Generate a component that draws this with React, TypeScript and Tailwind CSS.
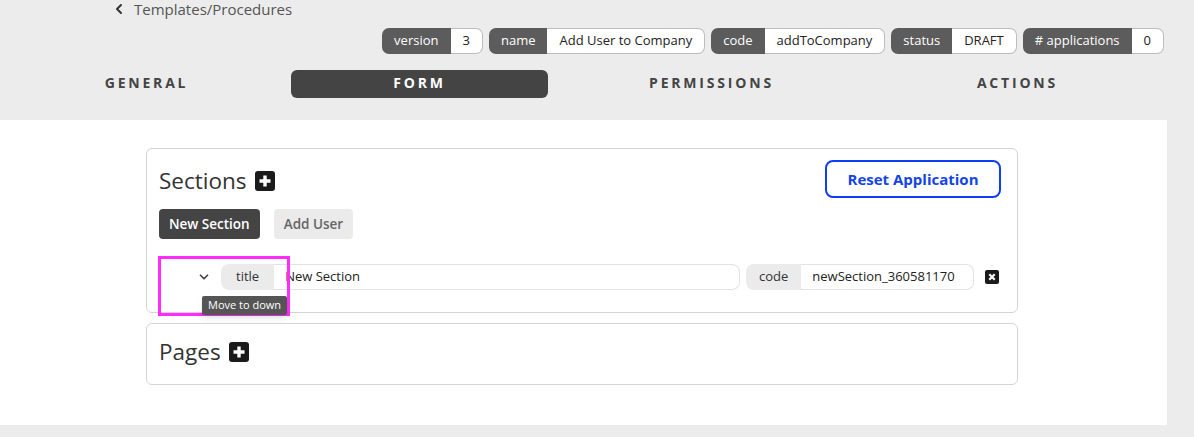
import { ChevronLeft, ChevronDown } from "lucide-react";

const meta = [
  { label: "version", value: "3" },
  { label: "name", value: "Add User to Company" },
  { label: "code", value: "addToCompany" },
  { label: "status", value: "DRAFT" },
  { label: "# applications", value: "0" },
];

function PlusBox({ size = 20 }: { size?: number }) {
  return (
    <svg width={size} height={size} viewBox="0 0 20 20">
      <rect width="20" height="20" rx="3" fill="#1b1b1b" />
      <path d="M10 4.5v11M4.5 10h11" stroke="#fff" strokeWidth="3.4" />
    </svg>
  );
}

function CloseBox() {
  return (
    <svg width="14" height="14" viewBox="0 0 14 14">
      <rect width="14" height="14" rx="2" fill="#1b1b1b" />
      <path d="M4.3 4.3l5.4 5.4M9.7 4.3l-5.4 5.4" stroke="#fff" strokeWidth="2.2" />
    </svg>
  );
}

export default function App() {
  return (
    <div
      className="h-[437px] w-[1194px] overflow-hidden bg-[#ececec] text-[#333]"
      style={{ fontFamily: '"Open Sans", "Noto Sans", sans-serif' }}
    >
      {/* header */}
      <div className="flex h-[18px] items-center gap-[7px] pl-[111px] text-[15px] leading-[18px] text-[#555]">
        <ChevronLeft size={16} strokeWidth={3} className="text-[#333]" />
        <span>Templates/Procedures</span>
      </div>

      <div className="mt-[10px] flex justify-end gap-[6px] pr-[30px]">
        {meta.map((m) => (
          <div key={m.label} className="flex h-[26px] text-[13px]">
            <span className="flex items-center rounded-l-[7px] bg-[#5c5c5c] px-[12px] text-white">
              {m.label}
            </span>
            <span className="flex items-center rounded-r-[7px] border border-l-0 border-[#bdbdbd] bg-white px-[12px] text-[#222]">
              {m.value}
            </span>
          </div>
        ))}
      </div>

      {/* tabs */}
      <div className="mt-[16px] flex h-[28px] items-center text-[14px] font-bold tracking-[0.2em] text-[#444]">
        <div className="ml-[18px] flex w-[257px] justify-center pb-[4px]">GENERAL</div>
        <div className="ml-[16px] flex h-[28px] w-[257px] items-center justify-center rounded-[6px] bg-[#444] pb-[4px] text-white">
          FORM
        </div>
        <div className="ml-[35px] flex w-[257px] justify-center pb-[4px]">PERMISSIONS</div>
        <div className="ml-[49px] flex w-[257px] justify-center pb-[4px]">ACTIONS</div>
      </div>

      {/* body */}
      <div className="mt-[22px] h-[305px] w-[1167px] bg-white pt-[28px] pl-[146px]">
        <div className="w-[872px] rounded-[6px] border border-[#d4d4d5] px-[12px] pt-[11px] pb-[22px]">
          <div className="flex items-start justify-between">
            <div className="flex items-center gap-[8px] pt-[8px]">
              <span className="text-[22.5px] leading-[26px] text-[#333]">Sections</span>
              <PlusBox />
            </div>
            <button className="mr-[4px] h-[38px] w-[176px] rounded-[8px] border-2 border-[#0d3df2] text-[15px] font-bold text-[#1444e8]">
              Reset Application
            </button>
          </div>
          <div className="mt-[11px] flex gap-[14px]">
            <button className="h-[30px] rounded-[4px] bg-[#444] px-[10px] text-[13.5px] font-semibold text-white">
              New Section
            </button>
            <button className="h-[30px] rounded-[4px] bg-[#ebebeb] px-[10px] text-[13.5px] font-semibold text-[#666]">
              Add User
            </button>
          </div>
          <div className="relative mt-[25px] flex h-[26px] items-center">
            <div className="flex w-[62px] justify-end pr-[10px]">
              <ChevronDown size={14} strokeWidth={3} className="text-[#444]" />
            </div>
            <div className="flex h-[26px] w-[519px] text-[13px]">
              <span className="flex items-center rounded-l-[8px] bg-[#ebebeb] px-[15px] text-[#333]">title</span>
              <span className="flex flex-1 items-center rounded-r-[8px] border border-l-0 border-[#e3e3e3] bg-white pl-[11px] text-[#222]">
                New Section
              </span>
            </div>
            <div className="ml-[6px] flex h-[26px] w-[228px] text-[13px]">
              <span className="flex items-center rounded-l-[8px] bg-[#ebebeb] px-[13px] text-[#333]">code</span>
              <span className="flex flex-1 items-center rounded-r-[8px] border border-l-0 border-[#e3e3e3] bg-white pl-[11px] text-[#222]">
                newSection_360581170
              </span>
            </div>
            <div className="ml-[11px] flex items-center">
              <CloseBox />
            </div>

            {/* highlight + tooltip */}
            <div className="absolute left-[-1px] top-[-8px] h-[60px] w-[132px] border-[3px] border-[#ff2bff]" />
            <div className="absolute left-[43px] top-[32px] rounded-[2px] bg-[#555] px-[6px] py-[1px] text-[11px] text-white shadow-md">
              Move to down
            </div>
          </div>
        </div>

        <div className="mt-[10px] h-[62px] w-[872px] rounded-[6px] border border-[#d4d4d5] px-[12px] pt-[15px]">
          <div className="flex items-center gap-[8px]">
            <span className="text-[22.5px] leading-[26px] text-[#333]">Pages</span>
            <PlusBox />
          </div>
        </div>
      </div>
    </div>
  );
}
